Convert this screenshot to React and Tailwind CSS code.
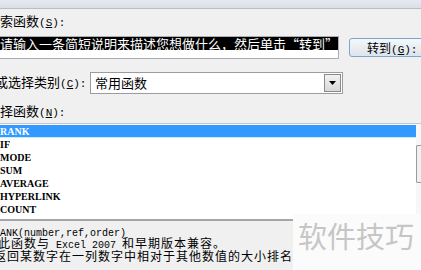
const CJK = "font-['Noto_Sans_CJK_SC',sans-serif]";
const MONO = "font-['Liberation_Mono',monospace]";

// functions listed under the selected one
const FUNCS = ['IF', 'MODE', 'SUM', 'AVERAGE', 'HYPERLINK', 'COUNT'];

const Key = ({ k }) => (
  <span className={`${MONO} text-[11px] tracking-normal`}>
    (<span className="underline">{k}</span>):
  </span>
);

export default function App() {
  return (
    <div className={`relative w-[421px] h-[270px] overflow-hidden bg-[#f0f0f0] text-black ${CJK}`}>
      {/* window edge */}
      <div className="h-[9px] bg-gradient-to-b from-[#e6ebf0] to-[#d8dfe6] border-b border-[#b7bec6]" />

      {/* search label */}
      <div className="mt-[5px] ml-[-13px] h-[14px] text-[13px] leading-[14px] whitespace-nowrap">
        搜索函数<Key k="S" />
      </div>

      {/* search box + go button */}
      <div className="mt-[8px] flex items-start">
        <div className="ml-[-2px] w-[347px] h-[23px] bg-white border border-[#abadb3] pl-[1px]">
          <span className="block w-fit bg-black text-white text-[13px] leading-[13px] whitespace-nowrap">
            请输入一条简短说明来描述您想做什么，然后单击“转到”
          </span>
        </div>
        <button className="ml-[10px] mt-[2px] h-[19px] w-[80px] shrink-0 rounded-[3px] border border-[#7aa6cf] bg-gradient-to-b from-[#f4f8fb] to-[#dde4ea] pl-[17px] text-left text-[12px] leading-[17px] whitespace-nowrap">
          转到<Key k="G" />
        </button>
      </div>

      {/* category */}
      <div className="mt-[13px] flex items-center">
        <div className="ml-[-5px] w-[95px] shrink-0 text-[13px] leading-[14px] whitespace-nowrap">
          或选择类别<Key k="C" />
        </div>
        <div className="w-[253px] h-[22px] bg-white border border-[#9a9ca1] flex items-center justify-between">
          <span className="pl-[4px] text-[13px] leading-[14px]">常用函数</span>
          <span className="mr-[1px] w-[17px] h-[18px] border border-[#8a8a8a] bg-gradient-to-b from-[#f2f2f2] to-[#d9d9d9] flex items-center justify-center">
            <svg width="7" height="4" viewBox="0 0 7 4">
              <path d="M0 0h7L3.5 4z" fill="#000" />
            </svg>
          </span>
        </div>
      </div>

      {/* function label */}
      <div className="mt-[10px] ml-[-13px] h-[14px] text-[13px] leading-[14px] whitespace-nowrap">
        选择函数<Key k="N" />
      </div>

      {/* function list */}
      <div className="mt-[5px] h-[98px] bg-white border-t border-[#c4c8cc] border-b-2 border-b-[#a6a6a6] flex">
        <div className="flex-1 pt-[1px] font-['Liberation_Serif',serif] font-bold text-[10px]">
          <div className="h-[13px] leading-[13px] bg-[#3399ff] text-white border-b border-[#bfefff]">RANK</div>
          {FUNCS.map((f) => (
            <div key={f} className="h-[13px] leading-[13px]">{f}</div>
          ))}
        </div>
        <div className="w-[5px] bg-[#f7f7f7] pt-[21px]">
          <div className="h-[38px] border-l border-t border-b border-[#9a9a9a] rounded-l-[2px] bg-[#f0f0f0]" />
        </div>
      </div>

      {/* description */}
      <div className="mt-[2px] ml-[-6px] h-[13px] leading-[13px] whitespace-nowrap">
        <span className={`${MONO} text-[10px]`}>RANK(number,ref,order)</span>
      </div>
      <div className="ml-[-2px] h-[13px] text-[12px] tracking-[1px] leading-[13px] whitespace-nowrap">
        此函数与<span className={`${MONO} text-[10px] tracking-normal`}> Excel 2007 </span>和早期版本兼容。
      </div>
      <div className="ml-[-6px] h-[13px] text-[12px] tracking-[1px] leading-[13px] whitespace-nowrap">
        返回某数字在一列数字中相对于其他数值的大小排名
      </div>

      {/* watermark */}
      <div className="absolute left-[293px] top-[214px] right-0 bottom-0 bg-[#fbfbfb] pl-[5px] pt-[7px]">
        <span className="block text-[29px] leading-[29px] text-[#c6c6c6] whitespace-nowrap">软件技巧</span>
      </div>
    </div>
  );
}
